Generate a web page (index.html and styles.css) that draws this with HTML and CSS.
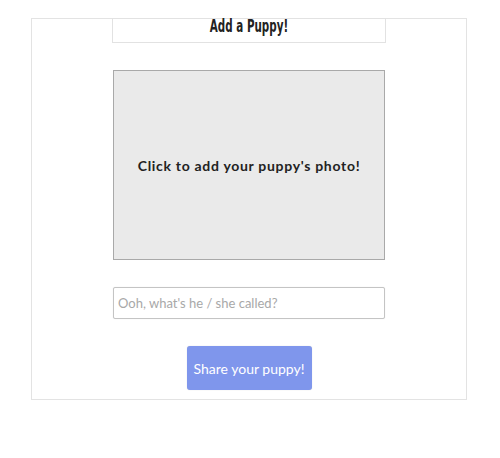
FILE: index.html
```html
<!DOCTYPE html>
<html lang="en">
<head>
  <meta charset="UTF-8" />
  <meta name="viewport" content="width=device-width, initial-scale=1.0" />
  <title>Add a Puppy</title>
  <link rel="stylesheet" href="styles.css">
</head>
<body>
  <section class="card">
    <header class="card-title">
      <h1>Add a Puppy!</h1>
    </header>

    <div class="photo-drop">Click to add your puppy's photo!</div>

    <input class="name-input" type="text" placeholder="Ooh, what's he / she called?" />

    <button class="share">Share your puppy!</button>
  </section>
</body>
</html>
```

FILE: styles.css
```css
body {
  margin: 0;
  padding: 18px 0 0 31px;
  font-family: Lato, 'Open Sans', sans-serif;
  background: #fff;
}

.card {
  width: 436px;
  box-sizing: border-box;
  border: 1px solid #e3e3e3;
  display: flex;
  flex-direction: column;
  align-items: center;
  padding-bottom: 9px;
}

.card-title {
  width: 274px;
  height: 25px;
  box-sizing: border-box;
  margin-top: -1px;
  border: 1px solid #e2e2e2;
  text-align: center;
}

.card-title h1 {
  margin: 0;
  font-family: 'DejaVu Sans Condensed', 'DejaVu Sans', sans-serif;
  font-weight: bold;
  font-size: 18px;
  line-height: 14px;
  color: #222;
  transform: scaleX(0.64);
}

.photo-drop {
  margin-top: 27px;
  width: 272px;
  height: 190px;
  box-sizing: border-box;
  background: #eaeaea;
  border: 1px solid #a9a9a9;
  display: flex;
  align-items: center;
  justify-content: center;
  font-weight: bold;
  font-size: 14px;
  letter-spacing: 0.7px;
  color: #222;
}

.name-input {
  margin-top: 27px;
  width: 272px;
  height: 32px;
  box-sizing: border-box;
  border: 1px solid #c4c4c4;
  border-radius: 2px;
  box-shadow: 0 0 1px #ddd;
  padding: 0 4px;
  font-family: Lato, sans-serif;
  font-size: 13px;
  color: #333;
}

.name-input::placeholder {
  color: #a8a8a8;
}

.share {
  margin-top: 27px;
  width: 125px;
  height: 44px;
  border: none;
  border-radius: 3px;
  background: #7f96ec;
  box-shadow: 0 0 1px #ccc;
  color: #fff;
  font-family: Lato, sans-serif;
  font-size: 14px;
  cursor: pointer;
}
```
